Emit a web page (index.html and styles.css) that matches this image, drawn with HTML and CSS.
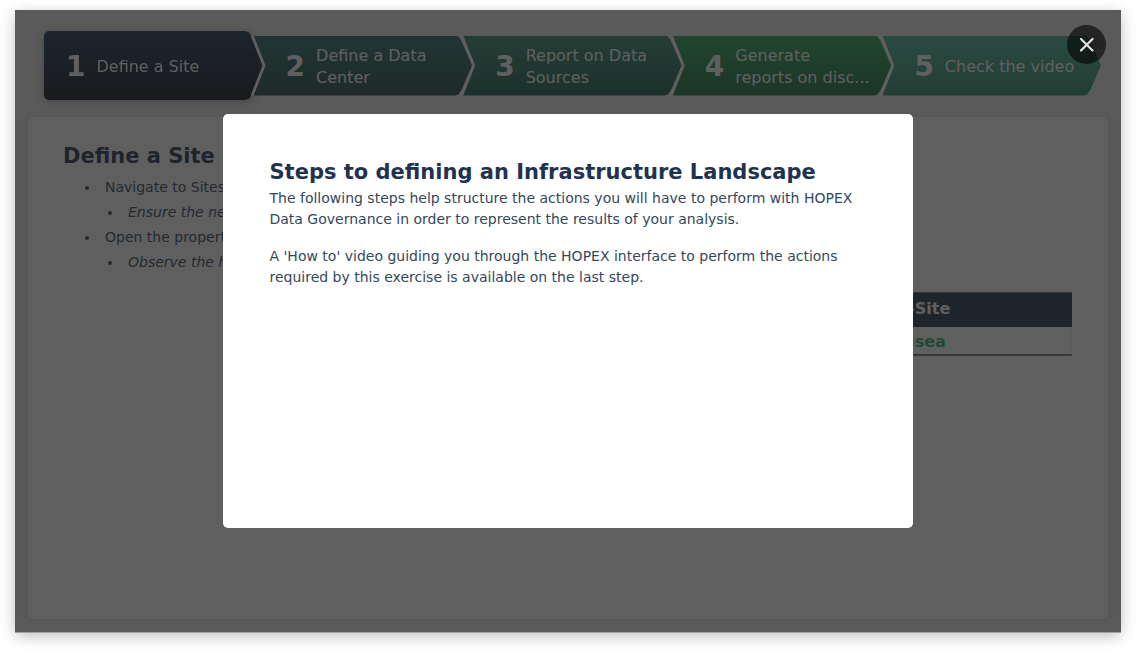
FILE: index.html
```html
<!DOCTYPE html>
<html lang="en">
<head>
<meta charset="utf-8">
<title>Define a Site</title>
<link rel="stylesheet" href="styles.css">
</head>
<body>
<div class="frame">
  <nav class="steps" aria-label="Steps">
    <button class="step step-1" type="button" aria-current="step"><span class="shape"><span class="num">1</span><span class="label">Define a Site</span></span></button>
    <button class="step step-2" type="button"><span class="shape"><span class="num">2</span><span class="label">Define a Data Center</span></span></button>
    <button class="step step-3" type="button"><span class="shape"><span class="num">3</span><span class="label">Report on Data Sources</span></span></button>
    <button class="step step-4" type="button"><span class="shape"><span class="num">4</span><span class="label">Generate<br>reports on disc...</span></span></button>
    <button class="step step-5" type="button"><span class="shape"><span class="num">5</span><span class="label">Check the video</span></span></button>
  </nav>
  <main class="card">
    <h1 class="title">Define a Site</h1>
    <ul class="list">
      <li>Navigate to Sites
        <ul class="sublist"><li>Ensure the new</li></ul>
      </li>
      <li>Open the property
        <ul class="sublist"><li>Observe the hi</li></ul>
      </li>
    </ul>
    <table class="sites">
      <thead><tr><th>Town-Site</th></tr></thead>
      <tbody><tr><td>Swansea</td></tr></tbody>
    </table>
  </main>
  <div class="overlay">
    <section class="modal" role="dialog" aria-modal="true" aria-labelledby="modal-title">
      <h2 class="title" id="modal-title">Steps to defining an Infrastructure Landscape</h2>
      <p>The following steps help structure the actions you will have to perform with HOPEX Data Governance in order to represent the results of your analysis.</p>
      <p>A 'How to' video guiding you through the HOPEX interface to perform the actions required by this exercise is available on the last step.</p>
    </section>
    <button class="close" type="button" aria-label="Close">
      <svg width="16" height="16" viewBox="0 0 16 16" fill="none" stroke="#dedede" stroke-width="2.3" stroke-linecap="round"><path d="M2 2l11.500 11.500M13.500 2L2 13.500"/></svg>
    </button>
  </div>
</div>
</body>
</html>
```
FILE: styles.css
```css
* { box-sizing: border-box; }

body {
  margin: 0;
  padding: 10px 15px 21px;
  background: #fff;
  color: #34475c;
  font: 14px/21px Verdana, "DejaVu Sans", sans-serif;
}

.frame {
  position: relative;
  display: flex;
  flex-direction: column;
  gap: 17px;
  min-height: calc(100vh - 31px);
  padding: 21px 13px 13px;
  background: #ededed;
  box-shadow: 0 4px 14px rgba(0, 0, 0, 0.25);
}

.steps {
  display: flex;
  align-items: center;
  padding: 0 7px 0 16px;
}

.step {
  position: relative;
  flex: 1 1 0;
  min-width: 0;
  margin: 0;
  padding: 0;
  border: 0;
  background: none;
  color: #fff;
  font: inherit;
  font-size: 16px;
  line-height: 22px;
  text-align: left;
}

.step + .step { margin-left: -9px; }

.step + .step::before {
  content: "";
  position: absolute;
  inset: 0 auto 0 -3px;
  width: 15px;
  background: #fff;
  clip-path: polygon(0 0, 3px 0, 100% 50%, 3px 100%, 0 100%, 12px 50%);
}

.shape {
  display: flex;
  align-items: center;
  gap: 11px;
  height: 60px;
  padding: 2px 12px 0 32px;
  clip-path: polygon(0 0, calc(100% - 17px) 0, calc(100% - 14px) 1px, calc(100% - 11px) 5px, 100% 50%, calc(100% - 11px) calc(100% - 5px), calc(100% - 14px) calc(100% - 1px), calc(100% - 17px) 100%, 0 100%, 12px 50%);
}

.step-1 .shape {
  height: 69px;
  padding-left: 22px;
  border-radius: 5px 0 0 5px;
  background: linear-gradient(#20395a, #0d121c);
  clip-path: polygon(0 0, calc(100% - 18px) 0, calc(100% - 14px) 1px, calc(100% - 11px) 5px, 100% 50%, calc(100% - 11px) calc(100% - 5px), calc(100% - 14px) calc(100% - 1px), calc(100% - 18px) 100%, 0 100%);
}
.step-1 { filter: drop-shadow(0 2px 4px rgba(0, 0, 0, 0.3)); }
.step-2 .shape { background: linear-gradient(#2c6e6e, #1e4a46); }
.step-3 .shape { background: linear-gradient(#338a70, #1f604f); }
.step-4 .shape { background: linear-gradient(#29a856, #1b6e3e); }
.step-5 .shape { background: linear-gradient(#4cb898, #308a6e); }

.num {
  font-size: 28px;
  font-weight: 700;
}

.label { min-width: 0; }

.card {
  flex: 1;
  padding: 28px 36px 24px 35px;
  border-radius: 5px;
  background: #fff;
  box-shadow: 0 0 8px rgba(0, 0, 0, 0.1);
}

.title {
  margin: 0;
  color: #1f3350;
  font-size: 21px;
  line-height: 22px;
}

.list {
  margin: 8px 0 0;
  padding-left: 37px;
  line-height: 25px;
  white-space: nowrap;
}

.list li { padding-left: 5px; }

.sublist {
  padding-left: 18px;
  list-style: disc;
  font-style: italic;
}

.sites {
  width: 32%;
  margin: 17px 0 0 auto;
  border: 1px solid #6b7c8c;
  border-width: 1px 0 2px;
  border-collapse: collapse;
  font-size: 16px;
  font-weight: 700;
  text-align: center;
}

.sites th {
  padding: 5px 16px 8px 8px;
  background: #233a50;
  color: #fff;
}

.sites td {
  padding: 4px 16px 2px 8px;
  border-right: 1px solid #ededed;
  color: #2fb272;
}

.overlay {
  position: absolute;
  inset: 0;
  display: flex;
  align-items: center;
  justify-content: center;
  background: rgba(30, 30, 30, 0.71);
  box-shadow: 0 1px 0 #a0a0a0;
}

.modal {
  width: 62.3%;
  min-height: 66.7%;
  padding: 46px;
  border-radius: 5px;
  background: #fff;
}

.modal p { margin: 0 0 16px; }
.modal .title { margin-bottom: 4px; line-height: 24px; }

.close {
  position: absolute;
  top: 15px;
  right: 15px;
  display: flex;
  align-items: center;
  justify-content: center;
  width: 39px;
  height: 39px;
  padding: 0;
  border: 0;
  border-radius: 50%;
  background: rgba(0, 0, 0, 0.6);
}
```
